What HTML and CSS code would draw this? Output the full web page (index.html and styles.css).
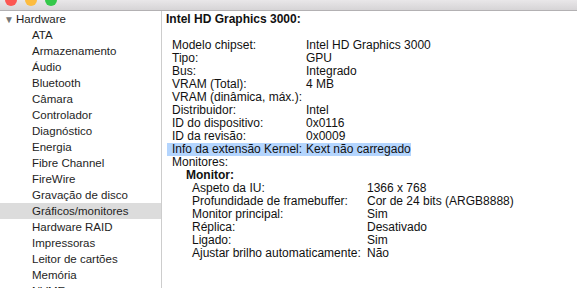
FILE: index.html
```html
<!DOCTYPE html>
<html>

<head>
    <title>Informações do Sistema</title>
    <link rel="stylesheet" href="styles.css">
</head>

<body>
    <div class="titleBar">
        <span class="light red"></span>
        <span class="light yellow"></span>
        <span class="light green"></span>
    </div>
    <div class="mainArea">
        <div class="sidebar">
            <div class="groupHeader"><span class="disclosure">&#9660;</span>Hardware</div>
            <div class="sideItem">ATA</div>
            <div class="sideItem">Armazenamento</div>
            <div class="sideItem">Áudio</div>
            <div class="sideItem">Bluetooth</div>
            <div class="sideItem">Câmara</div>
            <div class="sideItem">Controlador</div>
            <div class="sideItem">Diagnóstico</div>
            <div class="sideItem">Energia</div>
            <div class="sideItem">Fibre Channel</div>
            <div class="sideItem">FireWire</div>
            <div class="sideItem">Gravação de disco</div>
            <div class="sideItem selected">Gráficos/monitores</div>
            <div class="sideItem">Hardware RAID</div>
            <div class="sideItem">Impressoras</div>
            <div class="sideItem">Leitor de cartões</div>
            <div class="sideItem">Memória</div>
            <div class="sideItem">NVMExpress</div>
        </div>
        <div class="detailArea">
            <div class="detailTitle">Intel HD Graphics 3000:</div>
            <div class="infoGrid">
                <span>Modelo chipset:</span><span>Intel HD Graphics 3000</span>
                <span>Tipo:</span><span>GPU</span>
                <span>Bus:</span><span>Integrado</span>
                <span>VRAM (Total):</span><span>4 MB</span>
                <span>VRAM (dinâmica, máx.):</span><span></span>
                <span>Distribuidor:</span><span>Intel</span>
                <span>ID do dispositivo:</span><span>0x0116</span>
                <span>ID da revisão:</span><span>0x0009</span>
                <span class="marked markStart">Info da extensão Kernel:</span><span class="marked markEnd">Kext não carregado</span>
                <span>Monitores:</span><span></span>
            </div>
            <div class="subTitle">Monitor:</div>
            <div class="infoGrid subGrid">
                <span>Aspeto da IU:</span><span>1366 x 768</span>
                <span>Profundidade de framebuffer:</span><span>Cor de 24 bits (ARGB8888)</span>
                <span>Monitor principal:</span><span>Sim</span>
                <span>Réplica:</span><span>Desativado</span>
                <span>Ligado:</span><span>Sim</span>
                <span>Ajustar brilho automaticamente:</span><span>Não</span>
            </div>
        </div>
    </div>
</body>

</html>
```

FILE: styles.css
```css
body {
    margin: 0;
    background-color: #ffffff;
    color: #111111;
    font-family: "Liberation Sans", Arial, sans-serif;
    font-size: 12px;
    overflow: hidden;
}
.titleBar {
    display: flex;
    gap: 8px;
    height: 10px;
    padding-left: 4.5px;
    background: linear-gradient(#e9e7e9, #d6d4d6);
    border-bottom: 1px solid #b3b1b3;
    overflow: hidden;
}
.light {
    width: 12px;
    height: 12px;
    margin-top: -6px;
    border-radius: 50%;
}
.red {
    background-color: #fc5753;
}
.yellow {
    background-color: #fdbc40;
}
.green {
    background-color: #34c84a;
}
.mainArea {
    display: flex;
    height: 277px;
}
.sidebar {
    width: 161px;
    border-right: 1px solid #cdcdcd;
    font-size: 11.5px;
    color: #1e1e1e;
}
.groupHeader {
    height: 16px;
    line-height: 16px;
    padding-left: 4px;
}
.disclosure {
    display: inline-block;
    width: 12px;
    font-size: 10px;
    color: #777777;
}
.sideItem {
    height: 16px;
    line-height: 16px;
    padding-left: 32px;
}
.selected {
    background-color: #dcdcdc;
}
.detailArea {
    flex: 1;
    padding-left: 4px;
}
.detailTitle {
    font-weight: bold;
    line-height: 14px;
    padding-top: 1px;
    margin-bottom: 13px;
}
.infoGrid {
    display: grid;
    grid-template-columns: 134px auto;
    justify-content: start;
    line-height: 13px;
    padding-left: 6px;
}
.marked {
    background-color: #b4d5fe;
}
.markStart {
    margin-left: -5px;
    padding-left: 5px;
}
.markEnd {
    justify-self: start;
}
.subTitle {
    font-weight: bold;
    line-height: 13px;
    padding-left: 20px;
}
.subGrid {
    grid-template-columns: 175px auto;
    padding-left: 26px;
}
```
